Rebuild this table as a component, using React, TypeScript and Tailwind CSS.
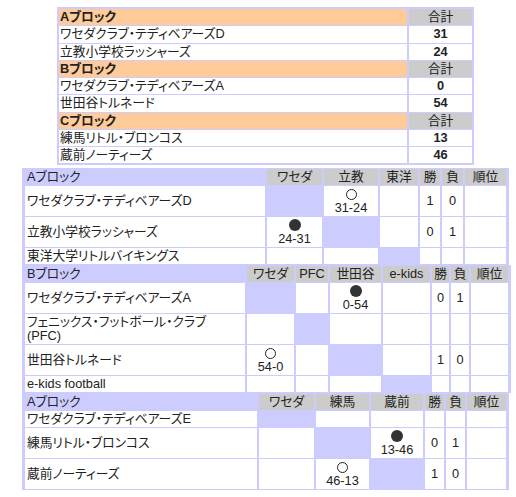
type Result = "self" | "" | { win: boolean; score: string };

type MatchRow = {
  name: React.ReactNode;
  results: Result[];
  win?: string;
  lose?: string;
};

type Block = {
  label: string;
  cols: string[];
  widths: string[];
  rows: MatchRow[];
};

const totals = [
  { label: "Aブロック", teams: [["ワセダクラブ・テディベアーズD", "31"], ["立教小学校ラッシャーズ", "24"]] },
  { label: "Bブロック", teams: [["ワセダクラブ・テディベアーズA", "0"], ["世田谷トルネード", "54"]] },
  { label: "Cブロック", teams: [["練馬リトル・ブロンコス", "13"], ["蔵前ノーティーズ", "46"]] },
];

const blocks: Block[] = [
  {
    label: "Aブロック",
    cols: ["ワセダ", "立教", "東洋"],
    widths: ["w-[240px]", "w-[55px]", "w-[54px]", "w-[38px]", "w-[20px]", "w-[21px]", "w-[41px]"],
    rows: [
      { name: "ワセダクラブ・テディベアーズD", results: ["self", { win: true, score: "31-24" }, ""], win: "1", lose: "0" },
      { name: "立教小学校ラッシャーズ", results: [{ win: false, score: "24-31" }, "self", ""], win: "0", lose: "1" },
      { name: "東洋大学リトルバイキングス", results: ["", "", "self"] },
    ],
  },
  {
    label: "Bブロック",
    cols: ["ワセダ", "PFC", "世田谷", "e-kids"],
    widths: ["w-[220px]", "w-[47px]", "w-[32px]", "w-[51px]", "w-[47px]", "w-[17px]", "w-[18px]", "w-[37px]"],
    rows: [
      { name: "ワセダクラブ・テディベアーズA", results: ["self", "", { win: false, score: "0-54" }, ""], win: "0", lose: "1" },
      {
        name: (
          <>
            フェニックス・フットボール・クラブ
            <br />
            (PFC)
          </>
        ),
        results: ["", "self", "", ""],
      },
      { name: "世田谷トルネード", results: [{ win: true, score: "54-0" }, "", "self", ""], win: "1", lose: "0" },
      { name: "e-kids football", results: ["", "", "", "self"] },
    ],
  },
  {
    label: "Aブロック",
    cols: ["ワセダ", "練馬", "蔵前"],
    widths: ["w-[232px]", "w-[55px]", "w-[53px]", "w-[52px]", "w-[19px]", "w-[19px]", "w-[39px]"],
    rows: [
      { name: "ワセダクラブ・テディベアーズE", results: ["self", "", ""] },
      { name: "練馬リトル・ブロンコス", results: ["", "self", { win: false, score: "13-46" }], win: "0", lose: "1" },
      { name: "蔵前ノーティーズ", results: ["", { win: true, score: "46-13" }, "self"], win: "1", lose: "0" },
    ],
  },
];

function ResultCell({ r }: { r: Result }) {
  if (r === "self") return <td className="bg-[#ccccff]" />;
  if (r === "") return <td className="bg-white" />;
  return (
    <td className="bg-white py-[1px] text-center align-middle">
      <div className="flex h-[14px] items-center justify-center">
        {r.win ? (
          <span className="block h-[11px] w-[11px] rounded-full border border-[#222]" />
        ) : (
          <span className="block h-[12px] w-[12px] rounded-full bg-[#333]" />
        )}
      </div>
      <div className="h-[14px]">{r.score}</div>
    </td>
  );
}

function BlockTable({ block }: { block: Block }) {
  return (
    <table className="ml-[22px] w-[487px] table-fixed border-separate border-x border-[#ccccff] bg-[#ccccff] [border-spacing:2px_1px]">
      <colgroup>
        {block.widths.map((w, i) => (
          <col key={i} className={w} />
        ))}
      </colgroup>
      <tbody>
        <tr>
          <td className="bg-[#ccccff] py-[1px] pl-[2px]">{block.label}</td>
          {[...block.cols, "勝", "負", "順位"].map((c) => (
            <td key={c} className="bg-[#cccccc] py-[1px] text-center">
              {c}
            </td>
          ))}
        </tr>
        {block.rows.map((row, i) => (
          <tr key={i}>
            <td className="bg-white py-[1px] pl-[2px] align-middle">{row.name}</td>
            {row.results.map((r, j) => (
              <ResultCell key={j} r={r} />
            ))}
            <td className="bg-white text-center align-middle">{row.win}</td>
            <td className="bg-white text-center align-middle">{row.lose}</td>
            <td className="bg-white" />
          </tr>
        ))}
      </tbody>
    </table>
  );
}

export default function App() {
  return (
    <div className="min-h-[497px] bg-white pt-[7px] font-['Liberation_Sans','Noto_Sans_CJK_JP',sans-serif] text-[12.75px] leading-[14px] text-[#222] [font-feature-settings:'palt']">
      <table className="ml-[57px] w-[417px] table-fixed border-separate border-y border-[#ccccff] bg-[#ccccff] [border-spacing:2px_1px]">
        <colgroup>
          <col className="w-[348px]" />
          <col className="w-[63px]" />
        </colgroup>
        <tbody>
          {totals.map((b) => (
            <>
              <tr key={b.label}>
                <td className="bg-[#ffcc99] py-[1px] pl-[1px] font-bold leading-[14.25px]">{b.label}</td>
                <td className="bg-[#cccccc] py-[1px] text-center leading-[14.25px]">合計</td>
              </tr>
              {b.teams.map(([name, pts]) => (
                <tr key={name}>
                  <td className="bg-white py-[1px] pl-[1px] leading-[14.25px]">{name}</td>
                  <td className="bg-white py-[1px] text-center font-bold leading-[14.25px]">{pts}</td>
                </tr>
              ))}
            </>
          ))}
        </tbody>
      </table>

      <div className="mt-[3px]">
        {blocks.map((b, i) => (
          <BlockTable key={i} block={b} />
        ))}
      </div>
    </div>
  );
}
